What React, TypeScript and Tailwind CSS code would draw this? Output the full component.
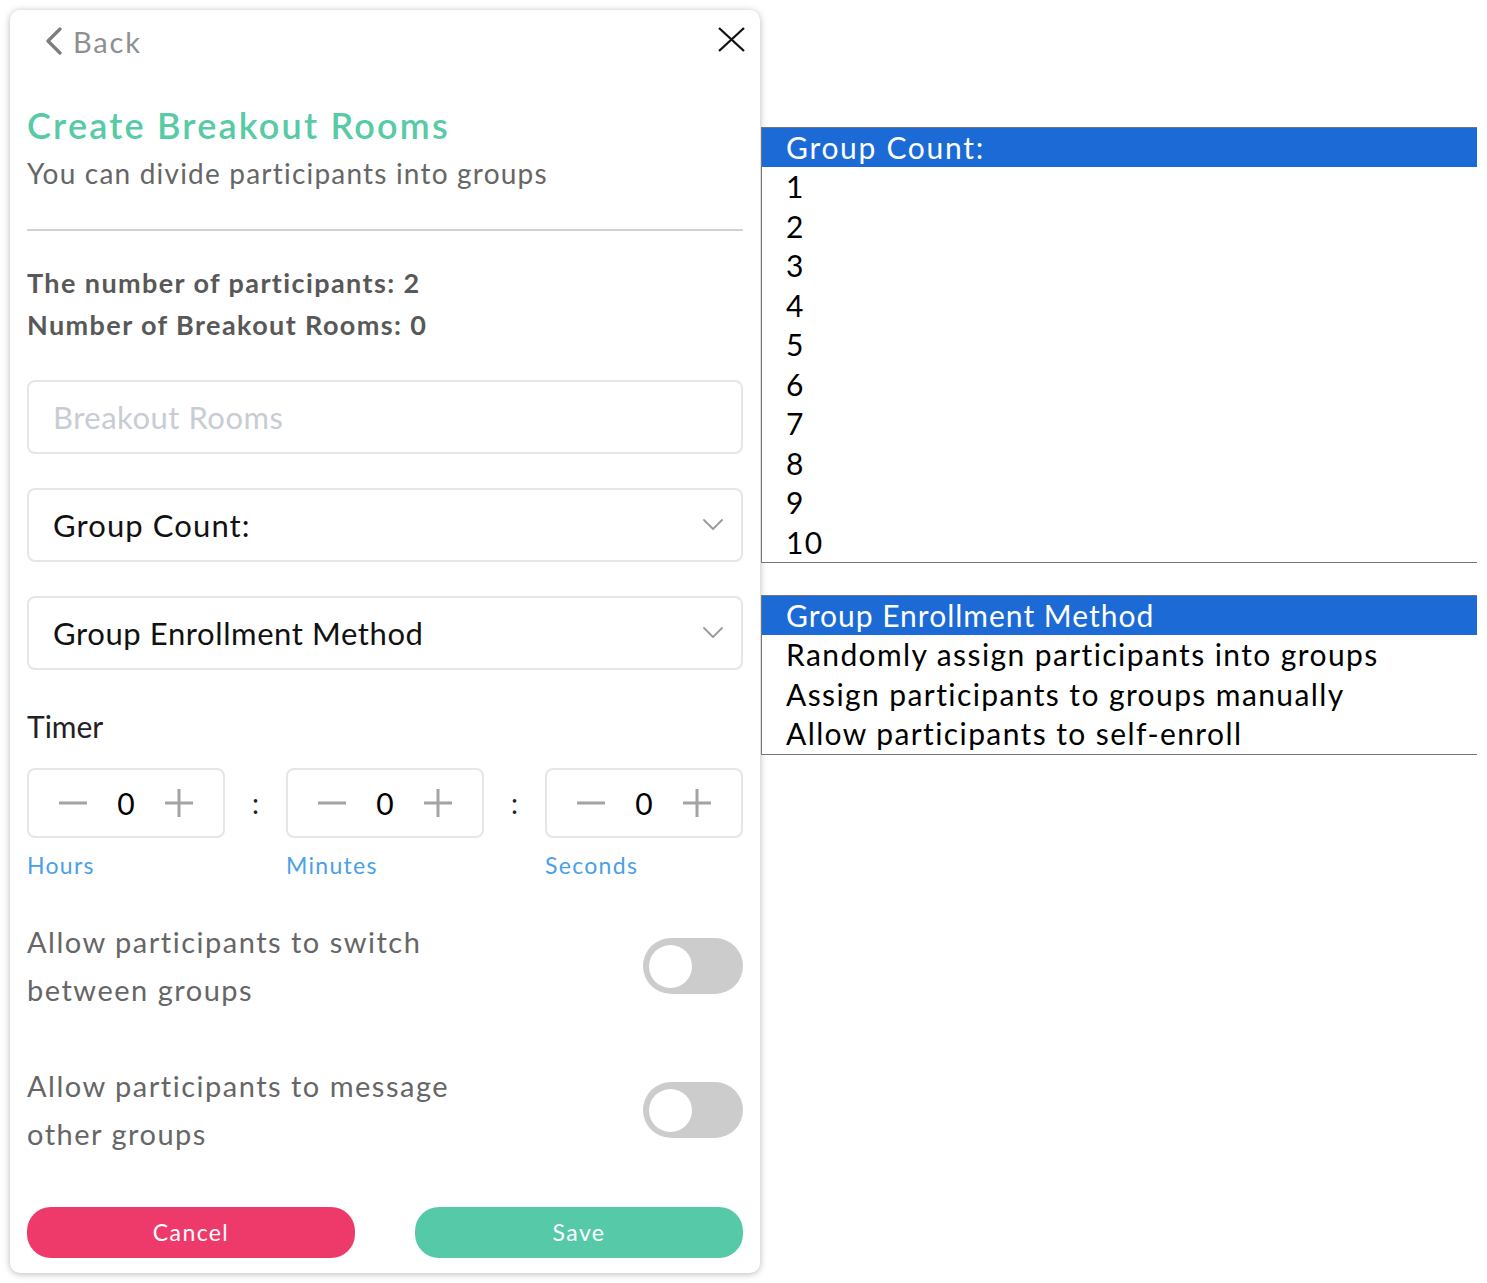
import React from "react";

const groupCounts = ["1", "2", "3", "4", "5", "6", "7", "8", "9", "10"];
const methods = [
  "Randomly assign participants into groups",
  "Assign participants to groups manually",
  "Allow participants to self-enroll",
];

function ChevronDown() {
  return (
    <svg width="20" height="12" viewBox="0 0 20 12" fill="none">
      <polyline points="1,1 10,10 19,1" stroke="#9a9a9a" strokeWidth="1.8" strokeLinecap="round" strokeLinejoin="round" />
    </svg>
  );
}

function Minus() {
  return (
    <svg width="28" height="28" viewBox="0 0 28 28" fill="none">
      <line x1="0" y1="14" x2="28" y2="14" stroke="#a3a3a3" strokeWidth="3" />
    </svg>
  );
}

function Plus() {
  return (
    <svg width="28" height="28" viewBox="0 0 28 28" fill="none">
      <line x1="0" y1="14" x2="28" y2="14" stroke="#a3a3a3" strokeWidth="3" />
      <line x1="14" y1="0" x2="14" y2="28" stroke="#a3a3a3" strokeWidth="3" />
    </svg>
  );
}

function Stepper() {
  return (
    <div className="flex h-[70px] items-center justify-between rounded-[8px] border-2 border-[#e6e6e6] px-[30px]">
      <Minus />
      <span className="text-[30px] leading-none text-black">0</span>
      <Plus />
    </div>
  );
}

function Toggle() {
  return (
    <div className="flex h-[56px] w-[100px] shrink-0 items-center rounded-full bg-[#cccccc] pl-[6px]">
      <div className="h-[43px] w-[43px] rounded-full bg-white" />
    </div>
  );
}

function ToggleRow({ lines }: { lines: string[] }) {
  return (
    <div className="flex items-center justify-between">
      <p className="text-[29px] leading-[48px] tracking-[1.5px] text-[#666]">
        {lines[0]}
        <br />
        {lines[1]}
      </p>
      <Toggle />
    </div>
  );
}

export default function App() {
  return (
    <div className="relative h-[1283px] w-[1487px] overflow-hidden bg-white pt-[10px] font-[Lato,'Noto_Sans',sans-serif]">
      {/* dialog card */}
      <div className="ml-[10px] flex h-[1263px] w-[750px] flex-col rounded-[10px] bg-white px-[17px] shadow-[0_1px_7px_rgba(0,0,0,0.28)]">
        <div className="mt-[11px] flex h-[40px] items-center justify-between">
          <div className="flex items-center gap-[10px] pl-[17px]">
            <svg width="19" height="28" viewBox="0 0 19 28" fill="none">
              <polyline points="16,2 4,14 16,26" stroke="#7d7d7d" strokeWidth="3.2" strokeLinecap="round" strokeLinejoin="round" />
            </svg>
            <span className="text-[29px] leading-none tracking-[1.8px] text-[#8f8f8f]">Back</span>
          </div>
          <svg width="27" height="25" viewBox="0 0 27 25" fill="none" className="-mr-[2px] -mt-[4px]">
            <line x1="1" y1="1" x2="26" y2="24" stroke="#111" strokeWidth="2.3" />
            <line x1="26" y1="1" x2="1" y2="24" stroke="#111" strokeWidth="2.3" />
          </svg>
        </div>

        <h1 className="mt-[42px] text-[36px] font-semibold leading-[44px] tracking-[2.2px] text-[#58caa5]">Create Breakout Rooms</h1>
        <p className="mt-[8px] text-[28px] leading-[36px] tracking-[1.2px] text-[#666]">You can divide participants into groups</p>

        <div className="mt-[38px] h-[2px] bg-[#d2d2d2]" />

        <div className="mt-[31px] text-[27px] font-bold leading-[42px] tracking-[1.4px] text-[#585858]">
          <p>The number of participants: 2</p>
          <p>Number of Breakout Rooms: 0</p>
        </div>

        <div className="mt-[34px] flex h-[74px] items-center rounded-[8px] border-2 border-[#e6e6e6] pl-[24px]">
          <span className="text-[31px] leading-none tracking-[0.5px] text-[#c8ccd4]">Breakout Rooms</span>
        </div>

        <div className="mt-[34px] flex h-[74px] items-center justify-between rounded-[8px] border-2 border-[#e6e6e6] pl-[24px] pr-[18px]">
          <span className="text-[31px] leading-none tracking-[1.1px] text-[#111]">Group Count:</span>
          <ChevronDown />
        </div>

        <div className="mt-[34px] flex h-[74px] items-center justify-between rounded-[8px] border-2 border-[#e6e6e6] pl-[24px] pr-[18px]">
          <span className="text-[31px] leading-none tracking-[0.6px] text-[#111]">Group Enrollment Method</span>
          <ChevronDown />
        </div>

        <p className="mt-[38px] text-[30px] leading-[36px] text-[#222]">Timer</p>

        <div className="mt-[24px] grid grid-cols-[198px_1fr_198px_1fr_198px] items-center">
          <Stepper />
          <span className="text-center text-[28px] leading-none text-[#222]">:</span>
          <Stepper />
          <span className="text-center text-[28px] leading-none text-[#222]">:</span>
          <Stepper />
        </div>
        <div className="mt-[13px] grid grid-cols-[198px_1fr_198px_1fr_198px] text-[23px] leading-[28px] tracking-[1.3px] text-[#4aa0e8]">
          <span>Hours</span>
          <span />
          <span>Minutes</span>
          <span />
          <span>Seconds</span>
        </div>

        <div className="mt-[39px]">
          <ToggleRow lines={["Allow participants to switch", "between groups"]} />
        </div>
        <div className="mt-[48px]">
          <ToggleRow lines={["Allow participants to message", "other groups"]} />
        </div>

        <div className="mt-[49px] flex justify-between">
          <button className="h-[51px] w-[328px] rounded-[24px] bg-[#ee3a6a] text-[23px] tracking-[1.4px] text-white">Cancel</button>
          <button className="h-[51px] w-[328px] rounded-[24px] bg-[#55c9a8] text-[23px] tracking-[1.4px] text-white">Save</button>
        </div>
      </div>

      {/* open select list: group count */}
      <div className="absolute left-[761px] top-[127px] w-[716px] border-y border-l border-[#767676] bg-white text-[30px] tracking-[1.3px] text-black">
        <div className="h-[39px] bg-[#1b6ad6] pl-[24px] leading-[39px] tracking-[1.7px] text-white">Group Count:</div>
        {groupCounts.map((n) => (
          <div key={n} className="h-[39.5px] pl-[24px] leading-[39.5px]">
            {n}
          </div>
        ))}
      </div>

      {/* open select list: enrollment method */}
      <div className="absolute left-[761px] top-[595px] w-[716px] border-y border-l border-[#767676] bg-white text-[30px] tracking-[1.4px] text-black">
        <div className="h-[39px] bg-[#1b6ad6] pl-[24px] leading-[39px] tracking-[1px] text-white">Group Enrollment Method</div>
        {methods.map((m) => (
          <div key={m} className="h-[39.5px] pl-[24px] leading-[39.5px]">
            {m}
          </div>
        ))}
      </div>
    </div>
  );
}
